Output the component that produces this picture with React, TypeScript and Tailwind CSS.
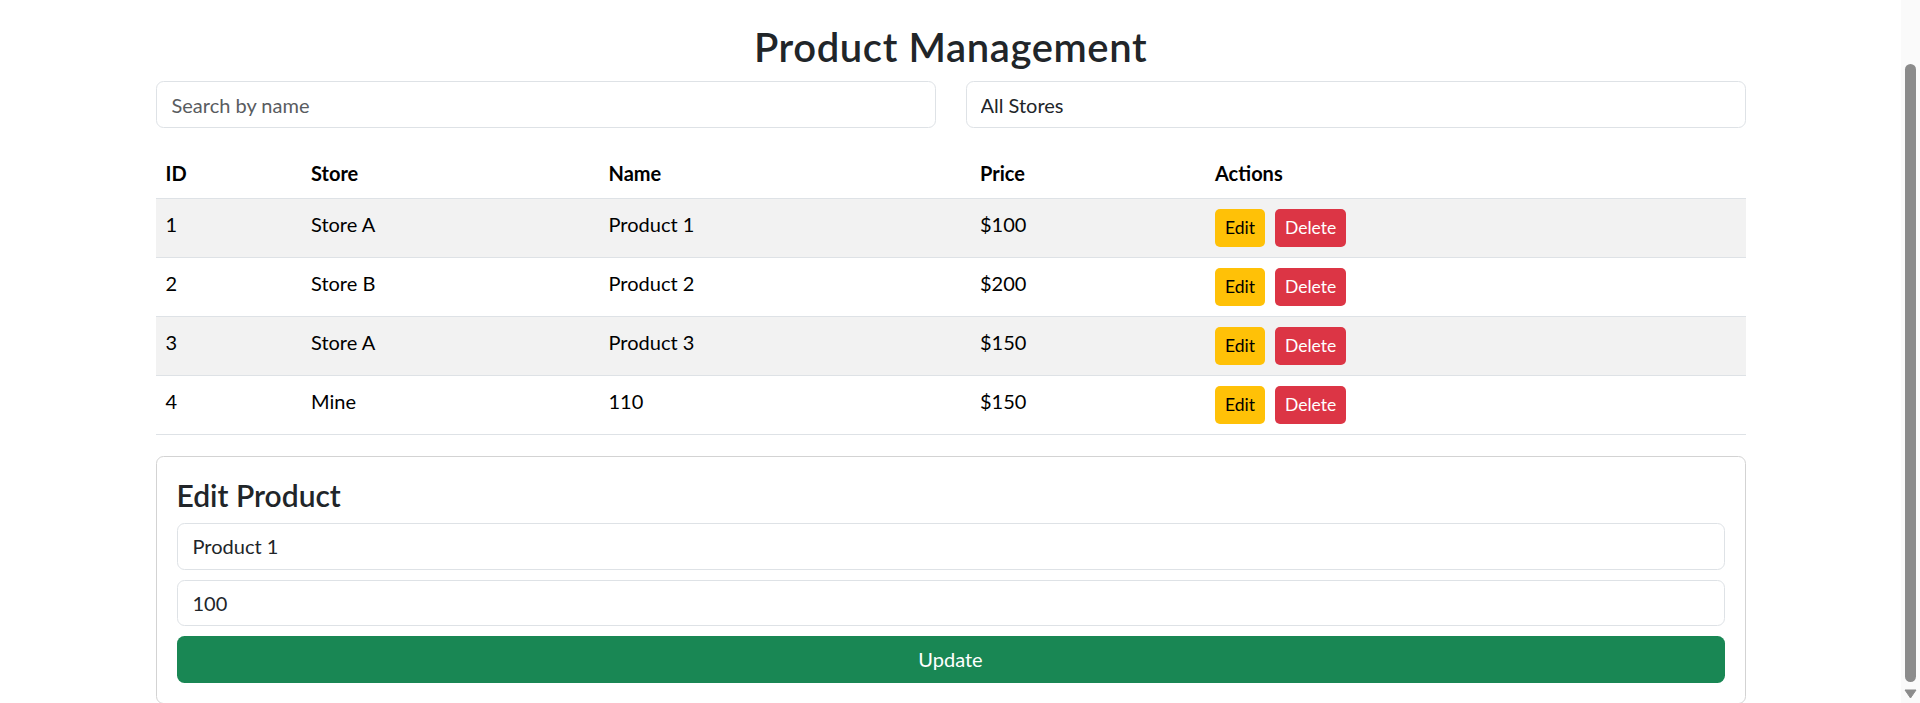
import { useLayoutEffect, useRef, useState } from "react";

type Product = { id: number; store: string; name: string; price: number };

const INITIAL: Product[] = [
  { id: 1, store: "Store A", name: "Product 1", price: 100 },
  { id: 2, store: "Store B", name: "Product 2", price: 200 },
  { id: 3, store: "Store A", name: "Product 3", price: 150 },
  { id: 4, store: "Mine", name: "110", price: 150 },
];

const FONT = { fontFamily: 'Lato, "Noto Sans", "Liberation Sans", sans-serif' };

function ScrollRail() {
  return (
    <div className="w-[19px] shrink-0 h-full bg-[#fafafa] flex flex-col items-center">
      <div className="mt-[64px] w-[11px] h-[618px] rounded-full bg-[#8b8b8b]" />
      <svg className="mt-[7px]" width="13" height="10" viewBox="0 0 13 10">
        <path d="M1 1 H12 L6.5 9 Z" fill="#8b8b8b" stroke="#8b8b8b" strokeWidth="1" strokeLinejoin="round" />
      </svg>
    </div>
  );
}

export default function App() {
  const scrollRef = useRef<HTMLDivElement>(null);
  const [products, setProducts] = useState<Product[]>(INITIAL);
  const [search, setSearch] = useState("");
  const [store, setStore] = useState("all");
  const [editing, setEditing] = useState<Product | null>(INITIAL[0]);
  const [form, setForm] = useState({ name: "Product 1", price: "100" });

  // page is shown scrolled a little, as in the capture
  useLayoutEffect(() => {
    if (scrollRef.current) scrollRef.current.scrollTop = 62;
  }, []);

  const stores = Array.from(new Set(products.map(p => p.store)));
  const visible = products.filter(
    p => p.name.toLowerCase().includes(search.toLowerCase()) && (store === "all" || p.store === store)
  );

  const startEdit = (p: Product) => {
    setEditing(p);
    setForm({ name: p.name, price: String(p.price) });
  };

  const update = () => {
    if (!editing) return;
    setProducts(ps => ps.map(p => (p.id === editing.id ? { ...p, name: form.name, price: Number(form.price) || 0 } : p)));
  };

  return (
    <div style={FONT} className="h-screen flex bg-white text-[#212529]">
      <div ref={scrollRef} className="flex-1 min-w-0 h-full overflow-y-auto">
        <div className="w-[1590px] mx-auto pt-[85px] pb-[13px]">
          <h2 className="text-center text-[40px] leading-[48px] font-semibold tracking-[0.6px] mb-[10px]">Product Management</h2>

          {/* Filters */}
          <div className="grid grid-cols-2 gap-[30px] mb-[20px]">
            <input
              value={search}
              onChange={e => setSearch(e.target.value)}
              placeholder="Search by name"
              className="h-[47px] w-full border border-[#dee2e6] rounded-[7.5px] px-[15px] text-[20px] text-[#212529] placeholder:text-[#595c5f] outline-none"
            />
            <select
              value={store}
              onChange={e => setStore(e.target.value)}
              className="h-[47px] w-full border border-[#dee2e6] rounded-[7.5px] px-[14px] text-[20px] text-[#212529] bg-white appearance-none outline-none"
            >
              <option value="all">All Stores</option>
              {stores.map(s => <option key={s} value={s}>{s}</option>)}
            </select>
          </div>

          {/* Table */}
          <div className="text-black text-[20px] leading-[30px]">
            <div className="grid grid-cols-[145.5px_297.5px_371.5px_235px_1fr] border-b border-[#dee2e6] font-bold">
              {["ID", "Store", "Name", "Price", "Actions"].map(h => (
                <div key={h} className="p-[10px]">{h}</div>
              ))}
            </div>
            {visible.map((p, i) => (
              <div
                key={p.id}
                className={"grid grid-cols-[145.5px_297.5px_371.5px_235px_1fr] border-b border-[#dee2e6] " + (i % 2 === 0 ? "bg-[#f2f2f2]" : "bg-white")}
              >
                <div className="p-[10px]">{p.id}</div>
                <div className="p-[10px]">{p.store}</div>
                <div className="p-[10px]">{p.name}</div>
                <div className="p-[10px]">${p.price}</div>
                <div className="p-[10px] flex items-start gap-[10px]">
                  <button
                    onClick={() => startEdit(p)}
                    className="h-[38px] px-[10px] rounded-[5px] bg-[#ffc107] text-black text-[17.5px] leading-none"
                  >
                    Edit
                  </button>
                  <button
                    onClick={() => setProducts(ps => ps.filter(x => x.id !== p.id))}
                    className="h-[38px] px-[10px] rounded-[5px] bg-[#dc3545] text-white text-[17.5px] leading-none"
                  >
                    Delete
                  </button>
                </div>
              </div>
            ))}
          </div>

          {/* Edit card */}
          {editing && (
            <div className="mt-[21px] border border-[#d3d3d3] rounded-[7.5px] p-[20px]">
              <h4 className="text-[30px] leading-[36px] font-semibold mb-[10px]">Edit Product</h4>
              <input
                value={form.name}
                onChange={e => setForm(f => ({ ...f, name: e.target.value }))}
                className="block h-[46.5px] w-full border border-[#dee2e6] rounded-[7.5px] px-[15px] text-[20px] text-[#212529] outline-none mb-[10px]"
              />
              <input
                value={form.price}
                onChange={e => setForm(f => ({ ...f, price: e.target.value }))}
                className="block h-[46.5px] w-full border border-[#dee2e6] rounded-[7.5px] px-[15px] text-[20px] text-[#212529] outline-none mb-[10px]"
              />
              <button
                onClick={update}
                className="block h-[46.5px] w-full rounded-[7.5px] bg-[#198754] text-white text-[20px]"
              >
                Update
              </button>
            </div>
          )}
        </div>
      </div>
      <ScrollRail />
    </div>
  );
}
